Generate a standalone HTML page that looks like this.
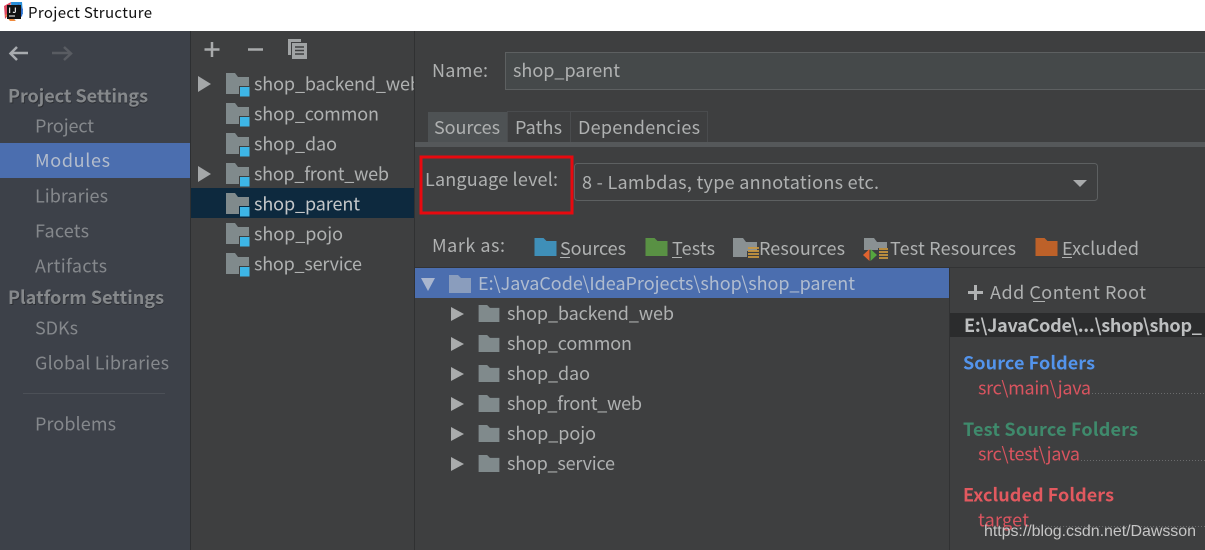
<!DOCTYPE html>
<html lang="en"><head><meta charset="utf-8"><title>Project Structure</title>
<style>
html,body{margin:0;padding:0;width:1205px;height:550px;overflow:hidden;background:#3e3f40}
svg{display:block}
body>svg{filter:blur(.35px)}
text{font-family:"Noto Sans CJK SC","Liberation Sans",sans-serif;font-size:18px;fill:#afb1b1}
.s{fill:#85888c}
.b{font-weight:700;fill:#85888b}
.r{fill:#d9545f}
</style></head><body>
<svg width="1205" height="550" viewBox="0 0 1205 550" xmlns="http://www.w3.org/2000/svg">
<defs>
<symbol id="f" viewBox="0 0 22 18"><path d="M0 0H9L12 3H22V18H0Z"/></symbol>
<symbol id="m" viewBox="0 0 25 24"><path fill="#808a8c" d="M1 0H10L13 4H24V13H14V21H1Z"/><rect x="15" y="14" width="9.500" height="9.500" fill="#3db5e6"/></symbol>
</defs>
<rect width="1205" height="31" fill="#fff"/>
<rect x="0" y="31" width="190" height="519" fill="#3d4149"/>
<rect x="190" y="31" width="1" height="519" fill="#2d2f31"/>
<rect x="191" y="31" width="223" height="519" fill="#3e3f40"/>
<rect x="414" y="31" width="1" height="519" fill="#303132"/>
<rect x="415" y="31" width="790" height="519" fill="#3e3f40"/>

<!-- logo -->
<path d="M4 6L11 2L9 14L5 19Z" fill="#e0475f"/><path d="M11 2H22L23 14L12 21Z" fill="#2a8fd8"/><path d="M18 3L23 9L22 17L16 12Z" fill="#2f6fd0"/><path d="M5 15L10 21H16L8 14Z" fill="#f08a3c"/>
<rect x="7" y="5" width="14" height="14" fill="#111"/>
<text x="8.500" y="13" style="font-size:7px;font-weight:700;fill:#fff" textLength="8">IJ</text>
<rect x="9" y="15.500" width="6" height="1" fill="#fff"/>
<text x="28" y="18" style="font-size:15px;fill:#111" textLength="124">Project Structure</text>

<!-- nav arrows -->
<path d="M28 53H11M17 47L10.500 53.500L17 60" fill="none" stroke="#a8abaf" stroke-width="2.500"/>
<path d="M52 53H70M64 47L71 53.500L64 60" fill="none" stroke="#595c62" stroke-width="2.500"/>

<!-- sidebar -->
<text x="9" y="103.500" class="b" textLength="139" style="fill:#2c2e33">Project Settings</text>
<text x="8" y="102.500" class="b" textLength="140">Project Settings</text>
<text x="35" y="132.500" class="s" textLength="59">Project</text>
<rect x="0" y="143" width="190" height="35" fill="#4b6eaf"/>
<text x="35" y="167" textLength="75" style="fill:#b4bdcc">Modules</text>
<text x="35" y="202.500" class="s" textLength="73">Libraries</text>
<text x="35" y="237.500" class="s" textLength="54">Facets</text>
<text x="35" y="272.500" class="s" textLength="72">Artifacts</text>
<text x="9" y="305" class="b" textLength="155" style="fill:#2c2e33">Platform Settings</text>
<text x="8" y="304" class="b" textLength="156">Platform Settings</text>
<text x="35" y="334.500" class="s" textLength="43">SDKs</text>
<text x="35" y="369.500" class="s" textLength="134">Global Libraries</text>
<rect x="23" y="393" width="142" height="1" fill="#4c5057"/>
<text x="35" y="430.500" class="s" textLength="81">Problems</text>

<!-- module toolbar -->
<path d="M212 42V57M204.500 49.500H219.500" stroke="#a9abac" stroke-width="2.500" fill="none"/>
<path d="M248 49.500H263" stroke="#a9abac" stroke-width="2.500" fill="none"/>
<path d="M288 39H301V42H291V55H288Z" fill="#a0a3a4"/>
<path d="M292 43H307V59H292Z" fill="#a0a3a4"/>
<path d="M295 47H304M295 50.500H304M295 54H304" stroke="#3e3f40" stroke-width="1.500"/>

<!-- module list -->
<rect x="191" y="188" width="223" height="30" fill="#0d293e"/>
<path d="M198 76L211 84L198 92Z" fill="#a4a7a8"/>
<path d="M198 166L211 174L198 182Z" fill="#a4a7a8"/>
<use href="#m" x="225" y="73" width="25" height="24"/>
<use href="#m" x="225" y="103" width="25" height="24"/>
<use href="#m" x="225" y="133" width="25" height="24"/>
<use href="#m" x="225" y="163" width="25" height="24"/>
<use href="#m" x="225" y="193" width="25" height="24"/>
<use href="#m" x="225" y="223" width="25" height="24"/>
<use href="#m" x="225" y="253" width="25" height="24"/>
<svg x="191" y="60" width="223" height="40" viewBox="191 60 223 40"><text x="254" y="90.500" textLength="167">shop_backend_web</text></svg>
<text x="254" y="120.500" textLength="125">shop_common</text>
<text x="254" y="150.500" textLength="83">shop_dao</text>
<text x="254" y="180.500" textLength="135">shop_front_web</text>
<text x="254" y="210.500" textLength="106" style="fill:#c4c7c9">shop_parent</text>
<text x="254" y="240.500" textLength="89">shop_pojo</text>
<text x="254" y="270.500" textLength="108">shop_service</text>

<!-- name -->
<text x="432" y="77" textLength="56">Name:</text>
<rect x="505.500" y="52.500" width="720" height="37" fill="#45494a" stroke="#5d6061"/>
<text x="513" y="77" textLength="107">shop_parent</text>

<!-- tabs -->
<rect x="428" y="112" width="79" height="30" fill="#4e5254"/>
<path d="M507.500 142V111.500H707.500V142M570.500 112V142" fill="none" stroke="#4a4c4e"/>
<rect x="415" y="142" width="790" height="5" fill="#55585a"/>
<text x="434" y="134" textLength="66">Sources</text>
<text x="515" y="134" textLength="47">Paths</text>
<text x="578" y="134" textLength="122">Dependencies</text>

<!-- language level -->
<rect x="574.500" y="163.500" width="523" height="37" rx="3" fill="#3e3f40" stroke="#5d6061"/>
<text x="425" y="186" textLength="133">Language level:</text>
<text x="582" y="189" textLength="297">8 - Lambdas, type annotations etc.</text>
<path d="M1073 180H1087L1080 187Z" fill="#a8aaab"/>
<rect x="421" y="157" width="151" height="56" fill="none" stroke="#e8090f" stroke-width="3"/>

<!-- mark as -->
<text x="432" y="252" textLength="73">Mark as:</text>
<use href="#f" x="534" y="238" width="23" height="18" fill="#3f8fb8"/>
<text x="560" y="255" textLength="66">Sources</text>
<rect x="560" y="257" width="10" height="1" fill="#afb1b1"/>
<use href="#f" x="645" y="238" width="23" height="18" fill="#599144"/>
<text x="672" y="255" textLength="43">Tests</text>
<rect x="672" y="257" width="10" height="1" fill="#afb1b1"/>
<path d="M733 238H743L746 242H757V251H747V257H733Z" fill="#8a9193"/>
<path d="M748 248H759M748 251H759M748 254H759M748 257H759" stroke="#c9973f" stroke-width="1.800"/>
<text x="759" y="255" textLength="86">Resources</text>
<path d="M864 238H874L877 242H887V248H878V250H864Z" fill="#8a9193"/>
<path d="M863 255L869.500 249V261Z" fill="#e0632f"/><path d="M870.500 249L877 255L870.500 261Z" fill="#55a63f"/>
<path d="M879 249H888M879 252H888M879 255H888M879 258H888" stroke="#c9973f" stroke-width="1.800"/>
<text x="890" y="255" textLength="126">Test Resources</text>
<use href="#f" x="1035" y="238" width="23" height="18" fill="#bd6129"/>
<text x="1062" y="255" textLength="77">Excluded</text>
<rect x="1062" y="257" width="10" height="1" fill="#afb1b1"/>

<!-- tree -->
<rect x="415" y="267" width="790" height="1" fill="#323334"/>
<rect x="415" y="268" width="534" height="30" fill="#4b6eaf"/>
<path d="M421 278H435L428 291Z" fill="#a9b6cf"/>
<use href="#f" x="449" y="275" width="22" height="18" fill="#8a9dbd"/>
<text x="478" y="290" textLength="377" style="fill:#b0bccf">E:\JavaCode\IdeaProjects\shop\shop_parent</text>

<path d="M451 307L464 314L451 321Z" fill="#a9abac"/>
<path d="M451 337L464 344L451 351Z" fill="#a9abac"/>
<path d="M451 367L464 374L451 381Z" fill="#a9abac"/>
<path d="M451 397L464 404L451 411Z" fill="#a9abac"/>
<path d="M451 427L464 434L451 441Z" fill="#a9abac"/>
<path d="M451 457L464 464L451 471Z" fill="#a9abac"/>
<use href="#f" x="478" y="305" width="22" height="17" fill="#808a8c"/>
<use href="#f" x="478" y="335" width="22" height="17" fill="#808a8c"/>
<use href="#f" x="478" y="365" width="22" height="17" fill="#808a8c"/>
<use href="#f" x="478" y="395" width="22" height="17" fill="#808a8c"/>
<use href="#f" x="478" y="425" width="22" height="17" fill="#808a8c"/>
<use href="#f" x="478" y="455" width="22" height="17" fill="#808a8c"/>
<text x="507" y="320" textLength="167">shop_backend_web</text>
<text x="507" y="350" textLength="125">shop_common</text>
<text x="507" y="380" textLength="83">shop_dao</text>
<text x="507" y="410" textLength="135">shop_front_web</text>
<text x="507" y="440" textLength="89">shop_pojo</text>
<text x="507" y="470" textLength="108">shop_service</text>

<!-- right panel -->
<rect x="949" y="268" width="1" height="282" fill="#313233"/>
<path d="M975.500 285V300M968 292.500H983" stroke="#b0b2b3" stroke-width="3" fill="none"/>
<text x="990" y="299" textLength="156">Add Content Root</text>
<rect x="1033" y="301" width="12" height="1" fill="#afb1b1"/>
<rect x="950" y="313" width="255" height="24" fill="#2b2c2d"/>
<text x="964" y="332" textLength="238" style="font-weight:700;fill:#bdbfc0">E:\JavaCode\...\shop\shop_</text>

<text x="963" y="369.500" textLength="132" style="font-weight:700;fill:#5394ec">Source Folders</text>
<text x="978" y="394.500" class="r" textLength="113">src\main\java</text>
<path d="M1092 393.500H1205" stroke="#6a6b6c" stroke-dasharray="1 2"/>
<text x="963" y="436" textLength="175" style="font-weight:700;fill:#3f8a6c">Test Source Folders</text>
<text x="978" y="460.500" class="r" textLength="102">src\test\java</text>
<path d="M1081 460.500H1205" stroke="#6a6b6c" stroke-dasharray="1 2"/>
<text x="963" y="501.500" textLength="151" style="font-weight:700;fill:#e2595f">Excluded Folders</text>
<text x="978" y="526.500" class="r" textLength="51">target</text>
<path d="M1030 526.500H1205" stroke="#6a6b6c" stroke-dasharray="1 2"/>
<text x="984" y="536" textLength="212" style='font-family:"Liberation Sans",sans-serif;font-size:16px;fill:#c6c6c6'>https://blog.csdn.net/Dawsson</text>
</svg>
</body></html>
